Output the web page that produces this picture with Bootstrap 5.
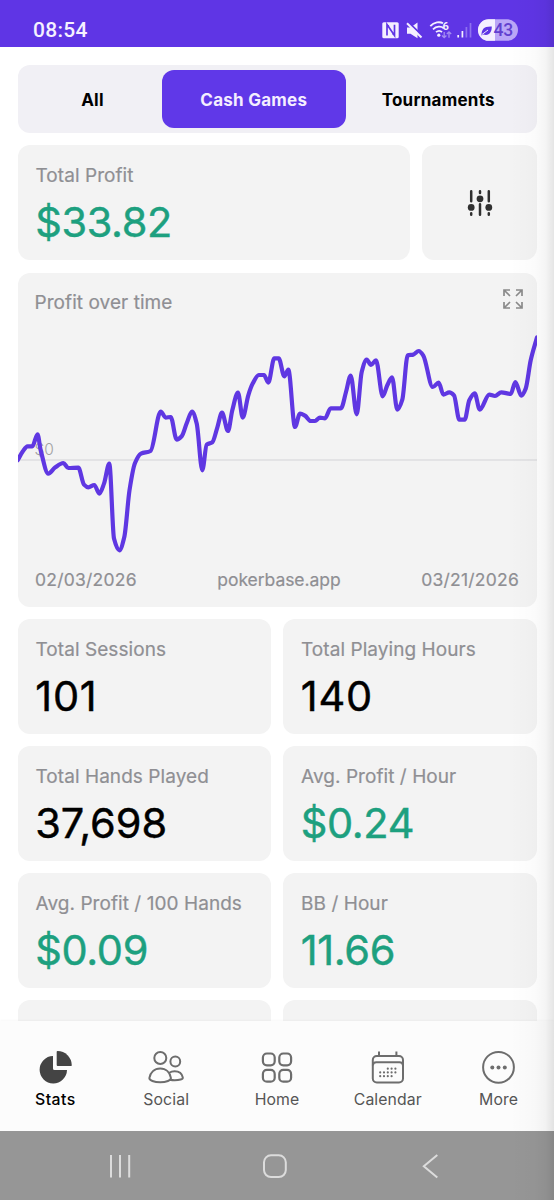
<!DOCTYPE html>
<html lang="en">
<head>
<meta charset="utf-8">
<meta name="viewport" content="width=device-width, initial-scale=1">
<title>Poker stats</title>
<link href="https://cdn.jsdelivr.net/npm/bootstrap@5.3.0/dist/css/bootstrap.min.css" rel="stylesheet">
<style>
body{font-family:Inter,"Liberation Sans",sans-serif;background:#fff;color:#000}
.phone{width:554px;height:1200px}
.edge{inset:0 0 0 auto;width:44px;background:linear-gradient(90deg,rgba(0,0,0,0),rgba(0,0,0,.015) 55%,rgba(0,0,0,.04) 80%,rgba(0,0,0,.1));pointer-events:none;z-index:5}
.status{height:47px;background:#5f35e5;padding:14px 36px 0 33px}
.clock{font-family:Roboto,sans-serif;font-size:21px;line-height:33px;font-weight:500;color:#f5f1ff;letter-spacing:.3px}
.screen{height:974px;padding:18px 17.5px 0;gap:12.3px}
.seg{height:68px;background:#f1f0f5;border-radius:12px;padding:5px 6px;font-size:17px;font-weight:700;letter-spacing:.25px}
.seg .btn{font:inherit;letter-spacing:inherit;border:0;border-radius:12px;color:#000;padding:1px 0 0;line-height:58px;height:58px}
.seg .s-all{width:138px}.seg .s-cash{width:184.5px;background:#6038e8;color:#f4eeff}.seg .s-tour{width:184.5px}
.tile{background:#f3f3f3;border-radius:12px}
.stat{height:115px;padding:18px 18px 0}
.lbl{font-size:19px;line-height:26px;color:#8f8f93;white-space:nowrap;letter-spacing:.06px;-webkit-text-stroke:.2px}
.val{font-size:41.5px;line-height:50px;margin-top:8px;margin-left:-.3px;white-space:nowrap;letter-spacing:0;-webkit-text-stroke:.45px}
.up{color:#1da07f;letter-spacing:-.35px}
.wide{letter-spacing:.8px}
.filter{width:115px;padding-left:1px}
.chart{height:334px}
.chart .head{height:50px;padding:17px 14px 0 17px}
.chart .foot{padding:0 17.5px;font-size:17.5px;line-height:24px;color:#8f8f93;margin-top:3px;letter-spacing:.23px;-webkit-text-stroke:.2px}
.chart .foot .site{letter-spacing:-.05px}
.stats{display:grid;grid-template-columns:253.5px 253.5px;gap:12px}
.tabs{height:110px;background:#fcfcfc;padding-top:27px;box-shadow:0 -1px 2px rgba(0,0,0,.03)}
.tabs a{width:110.8px;color:#555;font-size:15.8px;text-decoration:none;letter-spacing:.1px}
.tabs a.on{color:#000;font-weight:500;letter-spacing:.5px}
.tabs svg{display:block;margin-bottom:2px}
.tabs span{line-height:24px}
.sysnav{height:69px;background:#969696}
</style>
</head>
<body>
<div class="phone position-relative overflow-hidden d-flex flex-column">
  <header class="status d-flex justify-content-between flex-shrink-0">
    <span class="clock">08:54</span>
    <svg width="140" height="26" viewBox="378 17 140 26" style="margin-top:3px" fill="none" stroke="#f4efff">
      <rect x="382.3" y="22.3" width="16.4" height="16" rx="1.5" fill="#f4efff" stroke="none"/>
      <path d="M387 35.5V24.5L394.5 35.5V24.8" stroke="#5f35e5" stroke-width="1.7"/>
      <path d="M387 25l2.2 1M394.5 35l-2.2-1" stroke="#5f35e5" stroke-width="1"/>
      <path d="M407 27.5h3.5l7-4.9v15.7l-7-4.6H407z" fill="#f4efff" stroke="none"/>
      <path d="M407.8 21.7L423 36.5" stroke="#5f35e5" stroke-width="2"/>
      <path d="M407 23.2L421.5 37.5" stroke-width="2"/>
      <path d="M430.3 26.2C434 21.8 440 21.5 443 23.3M433 29.3c3.3-3.3 8.3-3.3 10.8-1M436 32.2c2-1.8 4.4-1.8 6 0" stroke-width="1.8"/>
      <circle cx="438.8" cy="35.2" r="1.6" fill="#f4efff" stroke="none"/>
      <path d="M444.2 32v5.5m-2.2-2l2.2 2.2 2.2-2.2M449 37.8V32m-2.2 2l2.2-2.2 2.2 2.2" stroke="#a58df1" stroke-width="1.3"/>
      <path d="M458.2 37.5v-2.6M462.4 37.5V31" stroke-width="1.7"/>
      <path d="M466.4 37.5V27M470.5 37.5V23" stroke="#8f72ef" stroke-width="1.7"/>
      <rect x="478" y="19.3" width="40" height="21.5" rx="10.7" fill="#baa6f7" stroke="none"/>
      <path d="M495 19.3h-6.3a10.7 10.7 0 0 0 0 21.5H495z" fill="#f4efff" stroke="none"/>
      <path d="M481.5 35.5c0-6 2-9.3 10.3-9 0 6-2.8 9.6-8.3 8" fill="#5f35e5" stroke="none"/>
      <path d="M482 34.5l6-4.5" stroke="#f4efff" stroke-width="1"/>
      <text x="442.6" y="29.8" font-family="Roboto" font-size="11" font-weight="700" fill="#f4efff" stroke="none">6</text>
      <text x="493.4" y="36.3" font-family="Roboto" font-size="17.5" font-weight="500" fill="#6240cf" stroke="none">43</text>
    </svg>
  </header>

  <main class="screen d-flex flex-column overflow-hidden flex-shrink-0">
    <div class="seg d-flex flex-shrink-0">
      <button class="btn s-all">All</button><button class="btn s-cash">Cash Games</button><button class="btn s-tour">Tournaments</button>
    </div>
    <div class="d-flex flex-shrink-0" style="gap:12px">
      <div class="tile stat flex-grow-1"><div class="lbl">Total Profit</div><div class="val up">$33.82</div></div>
      <div class="tile filter d-flex align-items-center justify-content-center">
        <svg width="26" height="28" viewBox="0 0 26 28" fill="#303030" stroke="#303030" stroke-width="2.5" stroke-linecap="round">
          <path d="M4.2 2.3v10M4.2 24.2v1.5M13 2.3v1.7M13 15.3v10.4M21.8 2.3v10M21.8 24.2v1.5"/>
          <g stroke="none"><circle cx="4.2" cy="18.4" r="3.4"/><circle cx="13" cy="9.8" r="3.4"/><circle cx="21.8" cy="18.4" r="3.4"/></g>
        </svg>
      </div>
    </div>
    <section class="tile chart flex-shrink-0">
      <div class="head d-flex justify-content-between">
        <span class="lbl">Profit over time</span>
        <svg width="20" height="20" viewBox="0 1 20 20" fill="none" stroke="#8a8a8a" stroke-width="1.7" overflow="visible"><path d="M1 7V1h6M1 1l6 6M13 1h6v6M19 1l-6 6M1 13v6h6M1 19l6-6M13 19h6v-6M19 19l-6-6"/></svg>
      </div>
      <svg class="d-block" width="519" height="242" viewBox="18 322.7 519 242">
        <text x="34.5" y="455" font-size="15.5" fill="#a2a2a2" font-weight="300">$0</text>
        <path d="M17.5 459.8H537" stroke="#dedee0" stroke-width="1.5"/>
        <path id="profit" fill="none" stroke="#5f37e2" stroke-width="4.2" stroke-linejoin="round" stroke-linecap="round"/>
      </svg>
      <div class="foot d-flex justify-content-between"><span>02/03/2026</span><span class="site">pokerbase.app</span><span>03/21/2026</span></div>
    </section>
    <section class="stats flex-shrink-0">
      <div class="tile stat"><div class="lbl">Total Sessions</div><div class="val wide">101</div></div>
      <div class="tile stat"><div class="lbl">Total Playing Hours</div><div class="val wide">140</div></div>
      <div class="tile stat"><div class="lbl">Total Hands Played</div><div class="val">37,698</div></div>
      <div class="tile stat"><div class="lbl">Avg. Profit / Hour</div><div class="val up">$0.24</div></div>
      <div class="tile stat"><div class="lbl">Avg. Profit / 100 Hands</div><div class="val up">$0.09</div></div>
      <div class="tile stat"><div class="lbl">BB / Hour</div><div class="val up">11.66</div></div>
      <div class="tile stat"></div><div class="tile stat"></div>
    </section>
  </main>

  <nav class="tabs d-flex flex-shrink-0">
    <a class="on d-flex flex-column align-items-center" href="#">
      <svg width="38" height="38" viewBox="36 1048 38 38" fill="#444"><path d="M53 1056a13.7 13.7 0 1 0 14 14H54.5a1.5 1.5 0 0 1-1.5-1.5z"/><path d="M57.5 1051q-.8 0-.8.8V1065q0 1 1 1H71q.8 0 .8-.8A14.4 14.4 0 0 0 57.5 1051z"/></svg>
      <span>Stats</span></a>
    <a class="d-flex flex-column align-items-center" href="#">
      <svg width="38" height="38" viewBox="147.3 1048 38 38" fill="none" stroke="#6d6d6d" stroke-width="2"><circle cx="160.6" cy="1058" r="6"/><circle cx="175.6" cy="1061.5" r="4.9"/><path d="M160.5 1068.6c6 0 9.7 4.2 10.7 9.3.5 2.4-4.8 4.4-10.7 4.4s-11.3-2-10.8-4.4c1-5.1 4.8-9.3 10.8-9.3zM169.6 1072.8c1.4-1 3.2-1.6 5.3-1.6 4.5 0 7.5 2.8 8.2 6.3.4 1.8-3.6 2.8-8.2 2.8-1.7 0-3.3-.2-4.6-.5"/></svg>
      <span>Social</span></a>
    <a class="d-flex flex-column align-items-center" href="#">
      <svg width="38" height="38" viewBox="258 1048 38 38" fill="none" stroke="#6d6d6d" stroke-width="2.2"><rect x="262.9" y="1053.5" width="11.8" height="11.8" rx="4"/><rect x="279.3" y="1053.5" width="11.8" height="11.8" rx="4"/><rect x="262.9" y="1069.9" width="11.8" height="11.8" rx="4"/><rect x="279.3" y="1069.9" width="11.8" height="11.8" rx="4"/></svg>
      <span>Home</span></a>
    <a class="d-flex flex-column align-items-center" href="#">
      <svg width="38" height="38" viewBox="369.2 1048 38 38" fill="none" stroke="#6d6d6d" stroke-width="2"><rect x="373" y="1056" width="30.2" height="26.4" rx="4"/><path d="M379.2 1051.5v4.5M396.6 1051.5v4.5M373 1065.3q.3-3 3.5-3h23.2q3.2 0 3.5 3"/><path d="M388 1068.7h9M380.4 1072.4h17M380.4 1076.2h14" stroke-linecap="round" stroke-width="2.2" stroke-dasharray="0 3.8"/></svg>
      <span>Calendar</span></a>
    <a class="d-flex flex-column align-items-center" href="#">
      <svg width="38" height="38" viewBox="480 1048 38 38" fill="none" stroke="#6d6d6d" stroke-width="2"><circle cx="498.5" cy="1067.3" r="15.4"/><g fill="#6d6d6d" stroke="none"><circle cx="492.3" cy="1067.5" r="2"/><circle cx="498.5" cy="1067.5" r="2"/><circle cx="504.8" cy="1067.5" r="2"/></g></svg>
      <span>More</span></a>
  </nav>

  <div class="sysnav flex-shrink-0">
    <svg class="d-block" width="554" height="69" viewBox="0 1131 554 69" fill="none" stroke="#dcdcdc" stroke-width="2">
      <path d="M111 1155v22.5M120 1155v22.5M129.2 1155v22.5"/>
      <rect x="264" y="1155.3" width="21.8" height="21.8" rx="7"/>
      <path d="M437.3 1155l-13.5 11.3 13.5 11.3"/>
    </svg>
  </div>
  <div class="edge position-absolute"></div>
</div>
<script src="https://cdn.jsdelivr.net/npm/bootstrap@5.3.0/dist/js/bootstrap.bundle.min.js"></script>
<script>
const pts=[[17.7,460],[22.7,451.3],[27.5,446],[32.3,446],[37.5,434],[40.7,450],[48.3,473.3],[55,467.3],[63.3,462.7],[68.3,467.7],[78.3,467.3],[84,484.3],[88.3,487],[94.3,484.7],[99.3,493.3],[104,483.3],[109.3,463.3],[114,538.3],[119.3,550],[124.3,536.7],[129.5,490],[135,462.7],[141,453.3],[150.5,450.7],[160.7,411.3],[165.7,417.3],[170.7,416.7],[176.7,439.3],[181.7,436],[186.7,423],[192,411.3],[196.7,423.3],[202.3,470],[206.7,444.3],[212.3,442],[217.3,427.3],[222,412.3],[228,430.7],[232.3,410],[238,392.3],[242.7,417.3],[248.3,395],[252.7,383.3],[259,374.7],[264,374.7],[268.3,382.3],[274.3,358],[278.7,358],[284.3,376],[288.3,369.3],[295,426.7],[300,413.3],[305,415.3],[310.7,420.7],[315,420.7],[320,417.3],[325,418],[330.7,408],[341,408],[346,391.7],[350.7,375.3],[356.7,414],[361.7,371.7],[366.7,359.3],[371,364.7],[376,360],[382.7,396],[387.3,385],[392,377],[397.3,409.3],[402.3,399.3],[407.7,355],[413.3,354.3],[418.7,350.7],[423.3,355.3],[432.7,386.7],[438.7,382.3],[443.3,394.3],[449.3,392],[454,395],[459.3,419.3],[464.7,419.3],[469.3,400],[474.7,393],[479.7,409.3],[489.3,394.3],[495,395.7],[501.3,392],[510.7,393.7],[515.3,381.7],[521.3,395.3],[525.7,388.3],[530.7,360],[537,337]];
// Monotone cubic interpolation: keeps peaks exactly at the data points
const n=pts.length,s=[],m=[];
for(let i=0;i<n-1;i++)s.push((pts[i+1][1]-pts[i][1])/(pts[i+1][0]-pts[i][0]));
for(let i=0;i<n;i++){
  if(i===0)m.push(s[0]);
  else if(i===n-1)m.push(s[n-2]);
  else m.push(s[i-1]*s[i]<=0?0:2*s[i-1]*s[i]/(s[i-1]+s[i]));
}
let d=`M${pts[0]}`;
for(let i=0;i<n-1;i++){
  const [x,y]=pts[i],[u,v]=pts[i+1],h=(u-x)/3;
  d+=`C${x+h} ${y+m[i]*h} ${u-h} ${v-m[i+1]*h} ${u} ${v}`;
}
document.getElementById('profit').setAttribute('d',d);
</script>
</body>
</html>
